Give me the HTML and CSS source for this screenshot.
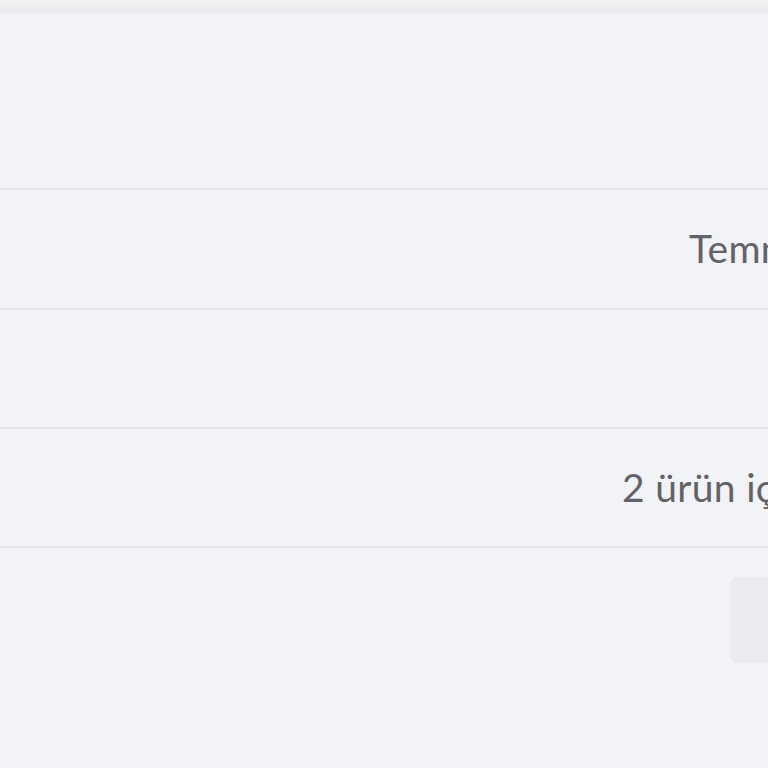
FILE: index.html
```html
<!DOCTYPE html>
<html lang="tr">
<head>
<meta charset="utf-8">
<title>Sipariş</title>
<link rel="stylesheet" href="styles.css">
</head>
<body>
<div class="page">
  <div class="topbar"></div>
  <div class="list">
    <div class="row row-first"></div>
    <div class="row row-tall"><span class="value value-date">Temmuz 2024</span></div>
    <div class="row"></div>
    <div class="row"><span class="value value-items">2 ürün için</span></div>
  </div>
  <div class="actions">
    <button class="btn" type="button"></button>
  </div>
</div>
</body>
</html>
```

FILE: styles.css
```css
html, body {
  margin: 0;
  padding: 0;
  background: #f2f3f7;
  overflow: hidden;
}
.page {
  width: 768px;
  height: 768px;
  overflow: hidden;
  font-family: "Lato", "Noto Sans", sans-serif;
  color: #636367;
}
.topbar {
  height: 16px;
  background: linear-gradient(#f2f2f4 0px, #f0f0f2 4px, #eaebed 8px, #ebebee 12px, #f2f3f7 16px);
}
.list {
  display: flex;
  flex-direction: column;
}
.row {
  height: 117px;
  border-bottom: 2px solid #e3e4e8;
  display: flex;
  align-items: center;
  white-space: nowrap;
  overflow: hidden;
}
.row-first {
  height: 172px;
}
.row-tall {
  height: 118px;
}
.value {
  font-size: 39px;
  line-height: 48px;
  letter-spacing: 0.3px;
}
.value-date {
  padding-left: 689px;
  margin-top: -3px;
}
.value-items {
  padding-left: 622px;
  margin-top: -2px;
}
.actions {
  padding-top: 29px;
  padding-left: 730px;
}
.btn {
  display: block;
  width: 120px;
  height: 86px;
  border: none;
  border-radius: 8px;
  background: #ebeaee;
  padding: 0;
}
```
